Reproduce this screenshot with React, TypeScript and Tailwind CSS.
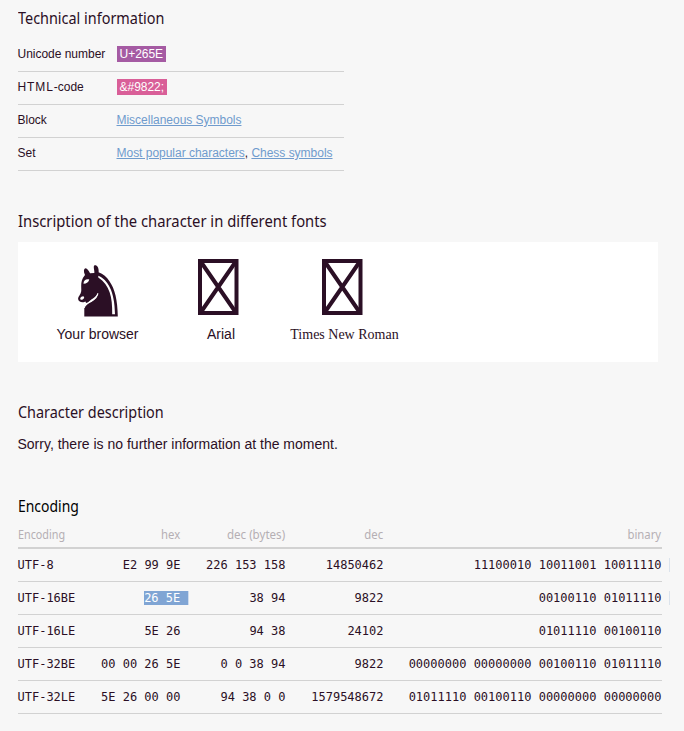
import type { ReactNode } from "react";

const rows = [
  ["UTF-8", "E2 99 9E", "226 153 158", "14850462", "11100010 10011001 10011110"],
  ["UTF-16BE", "26 5E", "38 94", "9822", "00100110 01011110"],
  ["UTF-16LE", "5E 26", "94 38", "24102", "01011110 00100110"],
  ["UTF-32BE", "00 00 26 5E", "0 0 38 94", "9822", "00000000 00000000 00100110 01011110"],
  ["UTF-32LE", "5E 26 00 00", "94 38 0 0", "1579548672", "01011110 00100110 00000000 00000000"],
];

const gridCols = "grid grid-cols-[66px_97px_105px_98px_278px]";

function Heading({ children, className = "", scale = "scale-x-[0.848]" }: { children: ReactNode; className?: string; scale?: string }) {
  return (
    <h2 className={`h-6 whitespace-nowrap text-[17px] leading-6 ${className}`}>
      <span className={`inline-block origin-left font-['Noto_Sans',sans-serif] ${scale}`}>{children}</span>
    </h2>
  );
}

function InfoRow({ label, children }: { label: ReactNode; children: ReactNode }) {
  return (
    <div className="flex h-[33px] items-center border-b border-[#d2d2d2] pb-0.5 text-[12px] tracking-[-0.02px]">
      <div className="w-[99px] shrink-0 whitespace-nowrap">{label}</div>
      <div className="whitespace-nowrap">{children}</div>
    </div>
  );
}

function Link({ children }: { children: ReactNode }) {
  return <a className="text-[#6f9bcd] underline">{children}</a>;
}

function Knight() {
  return (
    <svg className="ml-px mt-[6px]" width="42" height="52" viewBox="0 0 42 52">
      <path fill="#2b0f25" d="M8 10C6 6 7 3 9 3.2C11.5 5 12.5 7 13 8.3L17.3 8C17.7 5 15.8 1.5 17.5 .2C20.5-.3 22 3 21.6 7.2C26 8.8 30 12 32.3 16C38 24 40.5 35 40.8 51.5H7.3V43C7.3 41 8.7 39.5 11.5 38.3C16 36 20 33.5 20.8 28.3C18.5 32 16.7 33.5 14.3 34.5C12.5 35.5 11.8 37.5 9 38L8.5 36.5L6.5 37.3C3.2 37.7.5 35.5 1.2 33C2 30.5 4.2 29 4.3 25C4.2 20 3.5 15 8 10Z" />
      <path fill="none" stroke="white" strokeWidth="1.2" d="M7.2 42.8C8 39.5 11 38.2 14 36.5C18 34 20.8 32 20.8 28.3" />
      <path fill="white" d="M21.3 10.8C30.5 14.5 37.8 26 38 49.3H35.2C35.5 32 32.7 20 21.3 12.5Z" />
      <path fill="white" d="M6.5 18.7C6.5 15.5 8.7 13.8 12.3 14.5C11.7 17 9.7 18.7 6.5 18.7Z" />
      <ellipse cx="5.2" cy="33" rx="2.2" ry="1.4" fill="white" transform="rotate(-35 5.2 33)" />
    </svg>
  );
}

function MissingGlyph() {
  return (
    <svg width="41" height="56" viewBox="0 0 41 56" fill="none" stroke="#2b0f25">
      <rect x="2" y="2" width="36.5" height="52" strokeWidth="4" />
      <path d="M3 3 37.5 53M37.5 3 3 53" strokeWidth="4" />
    </svg>
  );
}

export default function App() {
  return (
    <main className="h-[731px] w-[684px] overflow-hidden bg-[#f7f7f7] pl-[17.5px] font-['Liberation_Sans',Arial,sans-serif] text-[#2b0f25]">
      <Heading className="mt-[6px]">Technical information</Heading>
      <section className="mt-[9px] w-[326px]">
        <InfoRow label="Unicode number">
          <span className="block h-4 bg-[#a55ba3] px-[3px] leading-4 text-white">U+265E</span>
        </InfoRow>
        <InfoRow label={<><span className="tracking-[0.9px]">HTML</span>-code</>}>
          <span className="block h-4 bg-[#d95f98] px-[3px] leading-4 text-white">&amp;#9822;</span>
        </InfoRow>
        <InfoRow label="Block"><Link>Miscellaneous Symbols</Link></InfoRow>
        <InfoRow label="Set"><Link>Most popular characters</Link>, <Link>Chess symbols</Link></InfoRow>
      </section>

      <Heading className="mt-[38px]" scale="scale-x-[0.87]">Inscription of the character in different fonts</Heading>
      <section className="mt-[9px] flex h-[120px] w-[640px] bg-white pl-[38.5px] pt-[17px] text-[14px]">
        <div className="flex w-[83px] flex-col items-center">
          <div className="h-[67px]"><Knight /></div>
          <div className="whitespace-nowrap leading-4">Your browser</div>
        </div>
        <div className="ml-[59px] flex w-[41px] flex-col items-center">
          <div className="h-[67px]"><MissingGlyph /></div>
          <div className="ml-[5px] leading-4">Arial</div>
        </div>
        <div className="ml-[51px] flex w-[109px] flex-col items-center">
          <div className="h-[67px] pr-[5px]"><MissingGlyph /></div>
          <div className="whitespace-nowrap pt-px font-['Liberation_Serif',serif] leading-4">Times New Roman</div>
        </div>
      </section>

      <Heading className="mt-[38px]">Character description</Heading>
      <p className="mt-[10px] h-5 text-[14px] leading-5">Sorry, there is no further information at the moment.</p>

      <Heading className="mt-[40px] text-black" scale="scale-x-[0.82]">Encoding</Heading>
      <section className="w-[644px]">
        <div className={`${gridCols} mt-1 h-[27px] border-b-2 border-[#d2d2d2] font-['Noto_Sans',sans-serif] text-[13px] leading-[24px] text-[#b5afb4]`}>
          <span className="origin-left scale-x-[0.83]">Encoding</span>
          <span className="origin-right scale-x-[0.87] pr-px text-right">hex</span>
          <span className="origin-right scale-x-[0.89] pr-px text-right">dec (bytes)</span>
          <span className="origin-right scale-x-[0.87] pr-px text-right">dec</span>
          <span className="origin-right scale-x-[0.87] pr-px text-right">binary</span>
        </div>
        {rows.map((row, index) => (
          <div key={row[0]} className={`${gridCols} relative h-[33px] border-b border-[#d2d2d2] font-['DejaVu_Sans_Mono',monospace] text-[12px] leading-[33px]`}>
            {row.map((value, column) => (
              <span key={column} className={column ? "whitespace-nowrap text-right" : "whitespace-nowrap"}>
                {index === 1 && column === 1 ? (
                  <span className="-mr-2 inline-block h-[14px] whitespace-pre border-r border-[#cfdced] bg-[#80a5d4] leading-[14px] text-white">{value + " "}</span>
                ) : value}
              </span>
            ))}
            {index < 2 && <i className="absolute -right-2 top-[9px] h-[14px] w-px bg-[#dbe3ec]" />}
          </div>
        ))}
      </section>
    </main>
  );
}
